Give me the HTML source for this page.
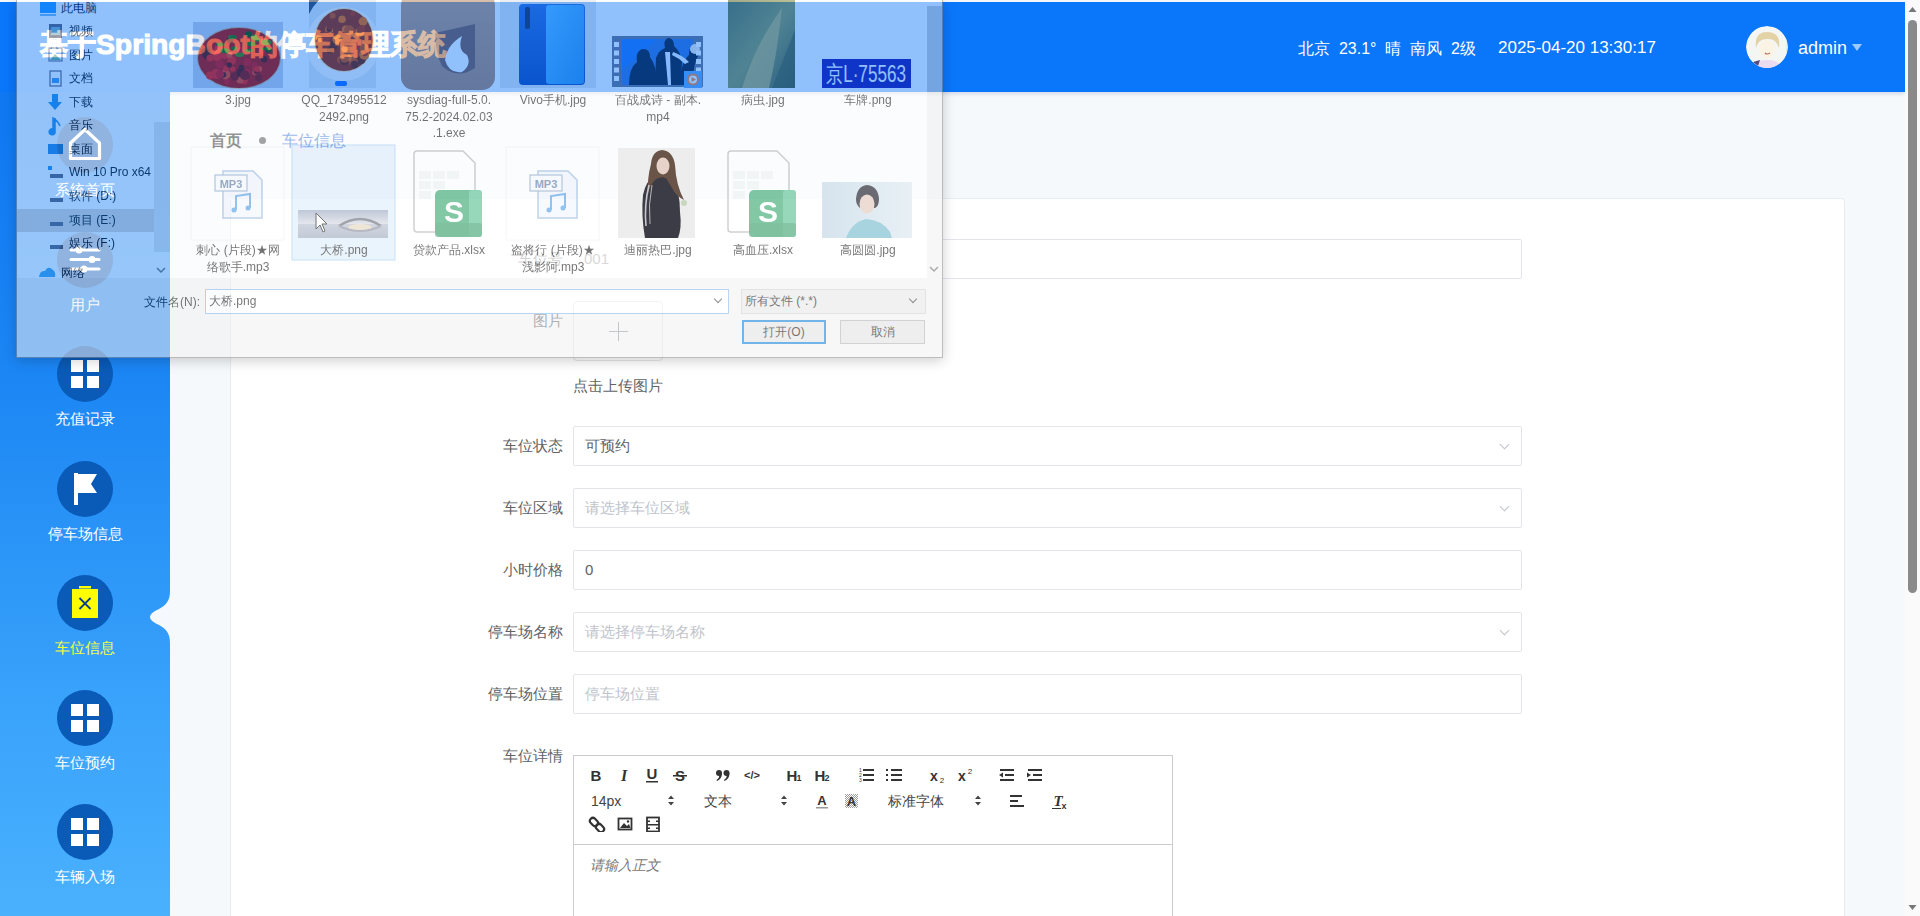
<!DOCTYPE html>
<html><head><meta charset="utf-8">
<style>
*{margin:0;padding:0;box-sizing:border-box}
html,body{width:1920px;height:916px;overflow:hidden;background:#fff;font-family:"Liberation Sans",sans-serif}
#page{position:absolute;left:0;top:0;width:1905px;height:916px;background:#f6f9fc}
#hdr{position:absolute;left:0;top:2px;width:1905px;height:90px;background:#0a76fa;box-shadow:0 2px 4px rgba(0,40,120,.15);color:#fff}
#hdr .title{position:absolute;left:40px;top:24px;font-size:28.3px;font-weight:bold;-webkit-text-stroke:1px #fff;white-space:nowrap;letter-spacing:0}
#hdr .wx{position:absolute;left:1298px;top:37px;font-size:16px;white-space:pre}
#hdr .dt{position:absolute;left:1498px;top:36px;font-size:17px}
#hdr .av{position:absolute;left:1746px;top:24px;width:42px;height:42px;border-radius:50%}
#hdr .un{position:absolute;left:1798px;top:36px;font-size:18px}
#hdr .tri{position:absolute;left:1852px;top:42px;width:0;height:0;border-left:5px solid transparent;border-right:5px solid transparent;border-top:7px solid #9ccaff}
#side{position:absolute;left:0;top:92px;width:170px;height:824px;background:linear-gradient(180deg,#0f78f2 0%,#1c86f4 35%,#3aa3fb 75%,#4ab1fd 100%)}
.mi{position:absolute;left:0;width:170px;text-align:center;color:#fff;font-size:15px}
.mi .c{position:absolute;left:57px;top:0;width:56px;height:56px;border-radius:50%;background:#0a5ab8}
.mi .t{position:absolute;left:0;top:64px;width:170px;text-align:center;white-space:nowrap}
.grid4{position:absolute;left:14px;top:14px;width:28px;height:28px}
.grid4 i{position:absolute;width:12px;height:12px;background:#fff}
#notch{position:absolute;left:148px;top:499px}
#crumb{position:absolute;left:210px;top:131px;font-size:16px;color:#111;font-weight:bold;white-space:nowrap}
#crumb .dot{display:inline-block;width:7px;height:7px;border-radius:50%;background:#333;margin:0 16px 3px 17px;vertical-align:middle}
#crumb .cur{color:#2060d8;font-weight:normal}
#card{position:absolute;left:230px;top:198px;width:1615px;height:760px;background:#fff;border:1px solid #e8ebef;border-radius:4px}
.lbl{position:absolute;right:1342px;font-size:15px;line-height:20px;color:#606266;white-space:nowrap;text-align:right}
.inp{position:absolute;left:573px;width:949px;height:40px;border:1px solid #e2e5ea;border-radius:2px;background:#fff;font-size:15px;color:#606266;padding-left:11px;line-height:38px}
.inp.ph{color:#c0c4cc}
.inp .arr{position:absolute;right:13px;top:14px;width:7px;height:7px;border-right:1px solid #c0c4cc;border-bottom:1px solid #c0c4cc;transform:rotate(45deg)}
#sb{position:absolute;left:1905px;top:0;width:15px;height:916px;background:#fafafa}
#sb .th{position:absolute;left:3px;top:20px;width:9px;height:573px;border-radius:5px;background:#8a8a8a}

#up{position:absolute;left:573px;top:301px;width:90px;height:60px;border:1px solid #e6e6e6;border-radius:4px;background:#fff}
#up .ph1{position:absolute;left:35px;top:29px;width:19px;height:1px;background:#8c939d}
#up .ph2{position:absolute;left:44px;top:20px;width:1px;height:19px;background:#8c939d}
#uptxt{position:absolute;left:573px;top:377px;font-size:15px;color:#606266}
#ed{position:absolute;left:573px;top:755px;width:600px;height:200px;border:1px solid #ccc;background:#fff}
#tb{position:absolute;left:0;top:0;width:598px;height:89px;border-bottom:1px solid #ccc}
#edph{position:absolute;left:16px;top:101px;font-size:14px;color:#777;font-style:italic}
.tg{position:absolute;white-space:nowrap;line-height:18px}

#dlg{position:absolute;left:16px;top:0;width:927px;height:358px;opacity:.55;background:#fff;box-shadow:0 3px 12px rgba(0,0,0,.35);border:1px solid #888;border-top:0;font-size:12px;color:#000;overflow:hidden}
#dlg .nav{position:absolute;left:0;top:0;width:153px;height:278px;background:#fff}
#dlg .nav .it{position:absolute;left:52px;white-space:nowrap;line-height:16px}
#dlg .nav .sel{position:absolute;left:0;top:209px;width:137px;height:23px;background:#dcd4cc}
#dlg .nav .vs{position:absolute;left:137px;top:122px;width:16px;height:130px;background:#e6e6e6}
#dlg .fn{position:absolute;text-align:center;width:100px;line-height:16.5px;color:#000;white-space:nowrap}
#dlg .btm{position:absolute;left:0;top:278px;width:925px;height:79px;background:#f0f0f0}
#dlg .vs2{position:absolute;left:910px;top:0;width:15px;height:278px;background:#f0f0f0}
#dlg .vs2 .th{position:absolute;left:0;top:0;width:15px;height:92px;background:#c8c8c8}
.chev{position:absolute;width:6px;height:6px;border-right:1px solid #333;border-bottom:1px solid #333;transform:rotate(45deg)}
</style></head><body>
<div id="page">
  <div id="crumb">首页<span class="dot"></span><span class="cur">车位信息</span></div>
  <div id="card"></div>
<div class="lbl" style="top:249px;color:#9a9a9a">车位号</div><div class="inp val" style="top:239px">001</div>
<div class="lbl" style="top:436px">车位状态</div><div class="inp val" style="top:426px">可预约<span class="arr"></span></div>
<div class="lbl" style="top:498px">车位区域</div><div class="inp ph" style="top:488px">请选择车位区域<span class="arr"></span></div>
<div class="lbl" style="top:560px">小时价格</div><div class="inp val" style="top:550px">0</div>
<div class="lbl" style="top:622px">停车场名称</div><div class="inp ph" style="top:612px">请选择停车场名称<span class="arr"></span></div>
<div class="lbl" style="top:684px">停车场位置</div><div class="inp ph" style="top:674px">停车场位置</div>
<div class="lbl" style="top:311px">图片</div>
<div id="up"><span class="ph1"></span><span class="ph2"></span></div>
<div id="uptxt">点击上传图片</div>
<div class="lbl" style="top:746px">车位详情</div>
<div style="position:absolute;left:229px;top:197px;width:714px;height:3px;background:linear-gradient(#f5f8fc 50%,#fff 50%)"></div><div style="position:absolute;left:572px;top:237px;width:371px;height:44px;background:#fff"></div><div style="position:absolute;left:584px;top:249px;font-size:15px;color:#a8a8a8;line-height:20px">001</div>
<div id="ed"><div id="tb"></div><svg class="tg" style="left:13.0px;top:11.3px" width="18" height="16" viewBox="0 0 18 16"><text x="9" y="14" font-size="15" font-weight="bold" text-anchor="middle" fill="#333" font-family="Liberation Sans">B</text></svg><svg class="tg" style="left:41.0px;top:11.3px" width="18" height="16" viewBox="0 0 18 16"><text x="9" y="14" font-size="16" font-style="italic" text-anchor="middle" fill="#333" font-family="Liberation Serif" font-weight="bold">I</text></svg><svg class="tg" style="left:69.0px;top:11.3px" width="18" height="16" viewBox="0 0 18 16"><text x="9" y="12" font-size="15" text-anchor="middle" fill="#333" font-family="Liberation Sans" font-weight="bold">U</text><rect x="3" y="14" width="12" height="1.5" fill="#333"/></svg><svg class="tg" style="left:97.0px;top:11.3px" width="18" height="16" viewBox="0 0 18 16"><text x="9" y="14" font-size="15" text-anchor="middle" fill="#333" font-family="Liberation Sans" font-weight="bold">S</text><rect x="2" y="8" width="14" height="1.5" fill="#333"/></svg><svg class="tg" style="left:140.0px;top:11.3px" width="18" height="16" viewBox="0 0 18 16"><g fill="#333"><circle cx="5" cy="6" r="3"/><path d="M8 6 Q8 12 3 14 L2.5 13 Q5.5 11 5.5 8Z"/><circle cx="12.5" cy="6" r="3"/><path d="M15.5 6 Q15.5 12 10.5 14 L10 13 Q13 11 13 8Z"/></g></svg><svg class="tg" style="left:169.0px;top:11.3px" width="18" height="16" viewBox="0 0 18 16"><text x="9" y="12" font-size="11" text-anchor="middle" fill="#333" font-family="Liberation Sans" font-weight="bold">&lt;/&gt;</text></svg><svg class="tg" style="left:210.0px;top:11.3px" width="20" height="16" viewBox="0 0 20 16"><text x="8" y="14" font-size="15" text-anchor="middle" fill="#333" font-family="Liberation Sans" font-weight="bold">H</text><text x="15" y="14" font-size="9" text-anchor="middle" fill="#333" font-family="Liberation Sans" font-weight="bold">1</text></svg><svg class="tg" style="left:238.0px;top:11.3px" width="20" height="16" viewBox="0 0 20 16"><text x="8" y="14" font-size="15" text-anchor="middle" fill="#333" font-family="Liberation Sans" font-weight="bold">H</text><text x="15" y="14" font-size="9" text-anchor="middle" fill="#333" font-family="Liberation Sans" font-weight="bold">2</text></svg><svg class="tg" style="left:283.0px;top:11.3px" width="18" height="16" viewBox="0 0 18 16"><g fill="#333"><rect x="6" y="2" width="11" height="2"/><rect x="6" y="7" width="11" height="2"/><rect x="6" y="12" width="11" height="2"/></g><text x="2" y="5" font-size="5" fill="#333">1</text><text x="2" y="10" font-size="5" fill="#333">2</text><text x="2" y="15" font-size="5" fill="#333">3</text></svg><svg class="tg" style="left:311.0px;top:11.3px" width="18" height="16" viewBox="0 0 18 16"><g fill="#333"><rect x="6" y="2" width="11" height="2"/><rect x="6" y="7" width="11" height="2"/><rect x="6" y="12" width="11" height="2"/><rect x="1" y="2" width="2" height="2"/><rect x="1" y="7" width="2" height="2"/><rect x="1" y="12" width="2" height="2"/></g></svg><svg class="tg" style="left:353.0px;top:11.3px" width="18" height="16" viewBox="0 0 18 16"><text x="7" y="14" font-size="14" text-anchor="middle" fill="#333" font-family="Liberation Sans" font-weight="bold">x</text><text x="15" y="16" font-size="8" text-anchor="middle" fill="#333" font-family="Liberation Sans">2</text></svg><svg class="tg" style="left:381.0px;top:11.3px" width="18" height="16" viewBox="0 0 18 16"><text x="7" y="14" font-size="14" text-anchor="middle" fill="#333" font-family="Liberation Sans" font-weight="bold">x</text><text x="15" y="7" font-size="8" text-anchor="middle" fill="#333" font-family="Liberation Sans">2</text></svg><svg class="tg" style="left:424.0px;top:11.3px" width="18" height="16" viewBox="0 0 18 16"><g fill="#333"><rect x="2" y="2" width="14" height="2"/><rect x="7" y="7" width="9" height="2"/><rect x="2" y="12" width="14" height="2"/><path d="M1 8 L5 5.5 V10.5 Z"/></g></svg><svg class="tg" style="left:452.0px;top:11.3px" width="18" height="16" viewBox="0 0 18 16"><g fill="#333"><rect x="2" y="2" width="14" height="2"/><rect x="7" y="7" width="9" height="2"/><rect x="2" y="12" width="14" height="2"/><path d="M5 8 L1 5.5 V10.5 Z"/></g></svg><span class="tg" style="left:17px;top:36px;font-size:14px;color:#444">14px</span><svg class="tg" style="left:93.0px;top:39px" width="8" height="11" viewBox="0 0 8 11"><path d="M1 4 L4 0.5 L7 4 Z M1 7 L4 10.5 L7 7 Z" fill="#444"/></svg><span class="tg" style="left:130px;top:36px;font-size:14px;color:#444">文本</span><svg class="tg" style="left:206.0px;top:39px" width="8" height="11" viewBox="0 0 8 11"><path d="M1 4 L4 0.5 L7 4 Z M1 7 L4 10.5 L7 7 Z" fill="#444"/></svg><svg class="tg" style="left:239.0px;top:36.5px" width="18" height="16" viewBox="0 0 18 16"><text x="9" y="12" font-size="13" text-anchor="middle" fill="#333" font-family="Liberation Sans" font-weight="bold">A</text><rect x="3" y="14" width="12" height="1.5" fill="#999"/></svg><svg class="tg" style="left:268.0px;top:36.5px" width="18" height="16" viewBox="0 0 18 16"><defs><pattern id="hatch" width="2" height="2" patternUnits="userSpaceOnUse"><rect width="1" height="1" fill="#777"/><rect x="1" y="1" width="1" height="1" fill="#777"/></pattern></defs><rect x="3" y="1" width="13" height="14" fill="url(#hatch)" opacity=".7"/><text x="9.5" y="13" font-size="13" text-anchor="middle" fill="#333" font-family="Liberation Sans" font-weight="bold">A</text></svg><span class="tg" style="left:314px;top:36px;font-size:14px;color:#444">标准字体</span><svg class="tg" style="left:400.0px;top:39px" width="8" height="11" viewBox="0 0 8 11"><path d="M1 4 L4 0.5 L7 4 Z M1 7 L4 10.5 L7 7 Z" fill="#444"/></svg><svg class="tg" style="left:434.0px;top:36.5px" width="18" height="16" viewBox="0 0 18 16"><g fill="#333"><rect x="2" y="2" width="12" height="2"/><rect x="2" y="7" width="8" height="2"/><rect x="2" y="12" width="14" height="2"/></g></svg><svg class="tg" style="left:477.0px;top:36.5px" width="18" height="16" viewBox="0 0 18 16"><text x="7" y="13" font-size="15" font-style="italic" text-anchor="middle" fill="#333" font-family="Liberation Serif" font-weight="bold">T</text><text x="13" y="16" font-size="9" text-anchor="middle" fill="#333" font-family="Liberation Sans" font-weight="bold">x</text><rect x="1" y="15" width="9" height="1.5" fill="#333"/></svg><svg class="tg" style="left:14.0px;top:60.0px" width="18" height="16" viewBox="0 0 18 16"><g fill="none" stroke="#333" stroke-width="2.2"><rect x="1.5" y="3" width="9" height="6" rx="3" transform="rotate(45 6 6)"/><rect x="7.5" y="9" width="9" height="6" rx="3" transform="rotate(45 12 12)"/></g></svg><svg class="tg" style="left:42.0px;top:60.0px" width="18" height="16" viewBox="0 0 18 16"><rect x="2.5" y="2.5" width="13" height="11" fill="none" stroke="#333" stroke-width="1.8"/><path d="M4 12 L8 7 L11 10 L13 8 L14.5 12 Z" fill="#333"/><circle cx="12" cy="5.5" r="1.2" fill="#333"/></svg><svg class="tg" style="left:70.0px;top:60.0px" width="18" height="16" viewBox="0 0 18 16"><rect x="3" y="1.5" width="12" height="14" fill="none" stroke="#333" stroke-width="1.8"/><g fill="#333"><rect x="3" y="4.5" width="3" height="1.5"/><rect x="3" y="8" width="3" height="1.5"/><rect x="3" y="11.5" width="3" height="1.5"/><rect x="12" y="4.5" width="3" height="1.5"/><rect x="12" y="8" width="3" height="1.5"/><rect x="12" y="11.5" width="3" height="1.5"/><rect x="6" y="8" width="6" height="1.5"/></g></svg><div id="edph">请输入正文</div></div>

</div>
<div id="hdr">
  <div class="title">基于SpringBoot的停车管理系统</div>
  <div class="wx">北京  23.1°  晴  南风  2级</div>
  <div class="dt">2025-04-20 13:30:17</div>
  <svg class="av" viewBox="0 0 42 42"><defs><clipPath id="avc"><circle cx="21" cy="21" r="21"/></clipPath></defs><g clip-path="url(#avc)"><rect width="42" height="42" fill="#f4f6f4"/><path d="M36 4 Q44 18 40 30 L42 0Z" fill="#b8ecf0"/><path d="M10 22 Q8 6 21 6 Q35 6 33 22 Q30 12 21 13 Q12 13 10 22Z" fill="#e2d2a6"/><path d="M13 20 Q14 31 21 33 Q29 31 29 20 Q25 14 21 14 Q16 14 13 20Z" fill="#fbf3e4"/><path d="M19 27 Q21 29 24 27" stroke="#c07060" stroke-width="1.2" fill="none"/><path d="M6 42 Q10 33 21 34 Q32 33 36 42Z" fill="#eadcf0"/><path d="M7 36 L14 34 L12 40Z" fill="#5a4a7a"/></g></svg>
  <div class="un">admin</div>
  <div class="tri"></div>
</div>
<div id="side">
<div class="mi" style="top:25.0px;color:#fff"><div class="c"><svg width="56" height="56" viewBox="0 0 56 56"><path d="M13.5 26 L28 12.5 L42.5 26 V41.5 H13.5 Z" fill="none" stroke="#fff" stroke-width="3.2" stroke-linejoin="round"/></svg></div><div class="t">系统首页</div></div>
<div class="mi" style="top:139.5px;color:#fff"><div class="c"><svg width="56" height="56" viewBox="0 0 56 56"><g stroke="#fff" stroke-width="3" stroke-linecap="round"><line x1="14" y1="18" x2="42" y2="18"/><line x1="14" y1="27.5" x2="42" y2="27.5"/><line x1="14" y1="37" x2="42" y2="37"/></g><g fill="#fff"><circle cx="22" cy="18" r="3.5"/><circle cx="35" cy="27.5" r="3.5"/><circle cx="27" cy="37" r="3.5"/></g></svg></div><div class="t">用户</div></div>
<div class="mi" style="top:254.0px;color:#fff"><div class="c"><svg width="56" height="56" viewBox="0 0 56 56"><g fill="#fff"><rect x="14" y="14" width="12" height="12"/><rect x="30" y="14" width="12" height="12"/><rect x="14" y="30" width="12" height="12"/><rect x="30" y="30" width="12" height="12"/></g></svg></div><div class="t">充值记录</div></div>
<div class="mi" style="top:368.5px;color:#fff"><div class="c"><svg width="56" height="56" viewBox="0 0 56 56"><path d="M17 12 H21 V44 H17 Z" fill="#fff"/><path d="M21 13 H40 L34 23 L40 32 H21 Z" fill="#fff"/></svg></div><div class="t">停车场信息</div></div>
<div class="mi" style="top:483.0px;color:#f5ff3a"><div class="c"><svg width="56" height="56" viewBox="0 0 56 56"><rect x="15" y="14" width="26" height="29" fill="#ffff00"/><rect x="22" y="11" width="12" height="2.5" fill="#ffff00"/><path d="M22.5 23 L33.5 34 M33.5 23 L22.5 34" stroke="#0a3f8a" stroke-width="1.8"/></svg></div><div class="t">车位信息</div></div>
<div class="mi" style="top:597.5px;color:#fff"><div class="c"><svg width="56" height="56" viewBox="0 0 56 56"><g fill="#fff"><rect x="14" y="14" width="12" height="12"/><rect x="30" y="14" width="12" height="12"/><rect x="14" y="30" width="12" height="12"/><rect x="30" y="30" width="12" height="12"/></g></svg></div><div class="t">车位预约</div></div>
<div class="mi" style="top:712.0px;color:#fff"><div class="c"><svg width="56" height="56" viewBox="0 0 56 56"><g fill="#fff"><rect x="14" y="14" width="12" height="12"/><rect x="30" y="14" width="12" height="12"/><rect x="14" y="30" width="12" height="12"/><rect x="30" y="30" width="12" height="12"/></g></svg></div><div class="t">车辆入场</div></div>
<svg id="notch" width="24" height="52" viewBox="0 0 24 52"><path d="M22 0 C22 10 18 14 11 18 C5 21 2 23 2 26 C2 29 5 31 11 34 C18 38 22 42 22 52 L24 52 L24 0 Z" fill="#f5f8fc"/></svg>
</div>
<div id="dlg"><div class="nav"><div class="sel"></div><div class="vs"></div><div class="it" style="left:44px;top:0px">此电脑</div><div class="it" style="left:52px;top:23px">视频</div><div class="it" style="left:52px;top:47px">图片</div><div class="it" style="left:52px;top:70px">文档</div><div class="it" style="left:52px;top:94px">下载</div><div class="it" style="left:52px;top:117px">音乐</div><div class="it" style="left:52px;top:141px">桌面</div><div class="it" style="left:52px;top:164px">Win 10 Pro x64</div><div class="it" style="left:52px;top:188px">软件 (D:)</div><div class="it" style="left:52px;top:212px">项目 (E:)</div><div class="it" style="left:52px;top:235px">娱乐 (F:)</div><div class="it" style="left:44px;top:265px">网络</div><svg style="position:absolute;left:0;top:0" width="153" height="278">
<rect x="23" y="2" width="16" height="11" fill="#1e90ff"/><rect x="23" y="14" width="16" height="2" fill="#6cb4f0"/>
<rect x="32" y="24" width="13" height="14" fill="#556" /><rect x="34" y="27" width="9" height="8" fill="#7ab"/>
<rect x="32" y="48" width="13" height="13" fill="none" stroke="#667" stroke-width="1.2"/><path d="M33 60 L38 54 L44 60Z" fill="#6a8"/>
<rect x="33" y="71" width="11" height="15" fill="none" stroke="#556" stroke-width="1.2"/><rect x="35" y="78" width="7" height="5" fill="#3a8ee6"/>
<path d="M35 94 H41 V102 H45 L38 110 L31 102 H35 Z" fill="#1e88e5"/>
<path d="M38 118 V131 A3 3 0 1 1 36 129 V118 Q41 121 43 126" fill="#1e88e5" stroke="#1e88e5" stroke-width="1.5"/>
<rect x="31" y="144" width="15" height="10" fill="#1e7fdc"/>
<rect x="31" y="166" width="4" height="4" fill="#1e88e5"/><rect x="33" y="174" width="13" height="4" fill="#556"/>
<rect x="33" y="198" width="13" height="4" fill="#556"/>
<rect x="33" y="222" width="13" height="4" fill="#556"/>
<rect x="33" y="245" width="13" height="4" fill="#556"/>
<path d="M22 277 Q23 270 28 271 Q31 265 36 270 Q39 272 38 277 Z" fill="#3a9be8"/>
<path d="M140 268 L144 272 L148 268" fill="none" stroke="#666" stroke-width="1.5"/>
</svg></div><svg style="position:absolute;left:0;top:0" width="925" height="278">
<defs>
<radialGradient id="food1" cx="50%" cy="55%" r="55%"><stop offset="0" stop-color="#c00000"/><stop offset=".55" stop-color="#f00000"/><stop offset=".85" stop-color="#a00000"/><stop offset="1" stop-color="#800000"/></radialGradient>
<radialGradient id="food2" cx="50%" cy="50%" r="50%"><stop offset="0" stop-color="#a01a00"/><stop offset=".6" stop-color="#8a0d00"/><stop offset="1" stop-color="#6a1000"/></radialGradient>
<linearGradient id="vivo" x1="0" y1="0" x2="0" y2="1"><stop offset="0" stop-color="#2a60d0"/><stop offset="1" stop-color="#0a3aa8"/></linearGradient>
<linearGradient id="vivo2" x1="0" y1="0" x2="1" y2="1"><stop offset="0" stop-color="#5ab8ff"/><stop offset="1" stop-color="#2a8ae0"/></linearGradient>
<linearGradient id="leaf" x1="0" y1="0" x2="1" y2="1"><stop offset="0" stop-color="#606a30"/><stop offset=".5" stop-color="#8a9040"/><stop offset="1" stop-color="#4a5020"/></linearGradient>
<linearGradient id="bridge" x1="0" y1="0" x2="0" y2="1"><stop offset="0" stop-color="#8a9ab8"/><stop offset=".5" stop-color="#d0d4de"/><stop offset="1" stop-color="#9aa8bc"/></linearGradient>
<linearGradient id="girl2" x1="0" y1="0" x2="1" y2="0"><stop offset="0" stop-color="#b8d4ea"/><stop offset="1" stop-color="#dfeaf3"/></linearGradient>
<linearGradient id="sysg" x1="0" y1="0" x2="0" y2="1"><stop offset="0" stop-color="#c0906a"/><stop offset="1" stop-color="#b07a55"/></linearGradient>
</defs>
<rect x="176" y="22" width="90" height="66" fill="#c8ccdc"/>
<ellipse cx="222" cy="58" rx="41" ry="30" fill="#c00010"/>
<circle cx="215.6" cy="69.0" r="2.7" fill="#ff1020"/>
<circle cx="200.2" cy="56.5" r="4.8" fill="#ff1020"/>
<circle cx="224.4" cy="67.4" r="2.7" fill="#600010"/>
<circle cx="242.3" cy="69.1" r="2.8" fill="#ff4030"/>
<circle cx="226.9" cy="80.3" r="3.9" fill="#ff1020"/>
<circle cx="192.9" cy="75.5" r="3.9" fill="#ff1020"/>
<circle cx="238.0" cy="72.5" r="2.8" fill="#ff4030"/>
<circle cx="210.0" cy="81.9" r="2.8" fill="#e00020"/>
<circle cx="207.5" cy="55.1" r="3.9" fill="#ff1020"/>
<circle cx="230.3" cy="62.4" r="3.7" fill="#e00020"/>
<circle cx="190.0" cy="55.5" r="4.0" fill="#600010"/>
<circle cx="202.6" cy="64.1" r="4.2" fill="#e00020"/>
<circle cx="223.0" cy="79.7" r="3.7" fill="#ff4030"/>
<circle cx="208.3" cy="74.5" r="5.0" fill="#ff4030"/>
<circle cx="239.6" cy="71.4" r="2.9" fill="#900010"/>
<circle cx="214.7" cy="60.4" r="4.4" fill="#ff1020"/>
<circle cx="191.0" cy="49.2" r="3.4" fill="#900010"/>
<circle cx="206.6" cy="74.8" r="2.7" fill="#600010"/>
<circle cx="238.0" cy="67.5" r="2.7" fill="#ff1020"/>
<circle cx="213.1" cy="40.0" r="3.2" fill="#600010"/>
<circle cx="199.2" cy="74.0" r="4.9" fill="#ff1020"/>
<circle cx="204.2" cy="76.0" r="2.6" fill="#600010"/>
<circle cx="223.5" cy="50.7" r="3.5" fill="#e00020"/>
<circle cx="244.6" cy="50.9" r="3.6" fill="#e00020"/>
<circle cx="188.9" cy="52.5" r="4.7" fill="#600010"/>
<circle cx="217.8" cy="76.5" r="4.2" fill="#900010"/>
<circle cx="209.0" cy="68.5" r="2.9" fill="#ff1020"/>
<circle cx="224.0" cy="72.5" r="4.6" fill="#600010"/>
<circle cx="230.1" cy="72.6" r="3.5" fill="#e00020"/>
<circle cx="203.0" cy="74.3" r="4.2" fill="#e00020"/>
<circle cx="193.1" cy="58.0" r="3.6" fill="#ff1020"/>
<circle cx="246.9" cy="41.6" r="3.5" fill="#ff4030"/>
<circle cx="212.4" cy="65.0" r="2.7" fill="#600010"/>
<circle cx="237.4" cy="64.9" r="2.8" fill="#e00020"/>
<circle cx="212.5" cy="55.1" r="2.9" fill="#ff4030"/>
<circle cx="239.9" cy="69.3" r="2.7" fill="#ff1020"/>
<circle cx="227.9" cy="75.4" r="4.9" fill="#900010"/>
<circle cx="201.6" cy="49.3" r="4.6" fill="#ff1020"/>
<circle cx="247.2" cy="59.2" r="3.3" fill="#600010"/>
<circle cx="241.8" cy="77.7" r="3.7" fill="#900010"/>
<ellipse cx="234.4" cy="43.9" rx="4.9" ry="2.3" fill="#208000"/>
<ellipse cx="203.4" cy="44.5" rx="4.3" ry="1.9" fill="#208000"/>
<ellipse cx="231.6" cy="34.1" rx="3.6" ry="2.9" fill="#105000"/>
<ellipse cx="215.3" cy="37.1" rx="4.3" ry="2.0" fill="#40a010"/>
<ellipse cx="207.7" cy="50.7" rx="4.4" ry="2.7" fill="#208000"/>
<ellipse cx="237.2" cy="37.2" rx="3.5" ry="2.6" fill="#40a010"/>
<ellipse cx="251.4" cy="50.2" rx="2.8" ry="2.5" fill="#105000"/>
<ellipse cx="249.5" cy="42.3" rx="5.0" ry="2.9" fill="#40a010"/>
<ellipse cx="215.8" cy="37.1" rx="3.4" ry="2.0" fill="#208000"/>
<ellipse cx="222.5" cy="54.7" rx="4.5" ry="2.2" fill="#40a010"/>
<ellipse cx="232.2" cy="50.4" rx="4.5" ry="1.7" fill="#208000"/>
<ellipse cx="217.1" cy="48.4" rx="3.4" ry="1.8" fill="#208000"/>
<ellipse cx="240.0" cy="39.6" rx="3.2" ry="2.1" fill="#40a010"/>
<ellipse cx="249.0" cy="48.7" rx="5.0" ry="1.5" fill="#208000"/>
<rect x="292" y="0" width="67" height="88" fill="#e6e8ea"/>
<path d="M292 0 H302 Q296 6 292 14Z" fill="#303850"/>
<circle cx="326" cy="44" r="37" fill="#fff8f0"/>
<ellipse cx="327" cy="40" rx="29" ry="31" fill="#a01800"/>
<circle cx="312.1" cy="29.7" r="4.0" fill="#ff6800"/>
<circle cx="312.2" cy="29.1" r="2.9" fill="#701000"/>
<circle cx="323.4" cy="38.8" r="3.8" fill="#c02000"/>
<circle cx="342.7" cy="32.5" r="4.6" fill="#ff6800"/>
<circle cx="330.2" cy="53.6" r="3.8" fill="#701000"/>
<circle cx="328.3" cy="24.1" r="3.5" fill="#a01800"/>
<circle cx="343.9" cy="59.6" r="4.7" fill="#701000"/>
<circle cx="314.7" cy="18.4" r="3.6" fill="#a01800"/>
<circle cx="343.0" cy="30.2" r="2.9" fill="#a01800"/>
<circle cx="302.8" cy="38.3" r="4.0" fill="#ff6800"/>
<circle cx="328.6" cy="29.3" r="3.7" fill="#ff6800"/>
<circle cx="324.0" cy="19.4" r="4.2" fill="#701000"/>
<circle cx="309.3" cy="36.3" r="4.7" fill="#c02000"/>
<circle cx="337.7" cy="44.3" r="4.4" fill="#c02000"/>
<circle cx="307.5" cy="39.0" r="3.6" fill="#c02000"/>
<circle cx="312.9" cy="27.1" r="3.0" fill="#a01800"/>
<circle cx="323.8" cy="59.7" r="3.8" fill="#d84000"/>
<circle cx="327.3" cy="60.3" r="4.8" fill="#701000"/>
<circle cx="336.1" cy="32.1" r="2.8" fill="#d84000"/>
<circle cx="339.5" cy="52.9" r="4.2" fill="#c02000"/>
<circle cx="316.2" cy="45.6" r="4.5" fill="#701000"/>
<circle cx="335.2" cy="33.4" r="2.9" fill="#701000"/>
<circle cx="346.0" cy="21.5" r="4.4" fill="#ff6800"/>
<circle cx="347.3" cy="54.7" r="5.0" fill="#ff6800"/>
<circle cx="332.2" cy="30.2" r="5.0" fill="#d84000"/>
<circle cx="313.1" cy="50.3" r="3.3" fill="#701000"/>
<circle cx="326.4" cy="36.2" r="3.6" fill="#a01800"/>
<circle cx="322.3" cy="23.4" r="4.1" fill="#a01800"/>
<circle cx="320.4" cy="39.5" r="4.9" fill="#ff6800"/>
<circle cx="337.6" cy="48.8" r="4.8" fill="#c02000"/>
<circle cx="336.4" cy="62.1" r="4.6" fill="#d84000"/>
<circle cx="315.7" cy="15.7" r="2.9" fill="#d84000"/>
<circle cx="344.2" cy="29.7" r="2.7" fill="#701000"/>
<circle cx="347.2" cy="48.2" r="4.7" fill="#d84000"/>
<circle cx="326.6" cy="43.6" r="4.5" fill="#c02000"/>
<circle cx="347.8" cy="53.0" r="3.2" fill="#c02000"/>
<circle cx="329.0" cy="42.1" r="3.5" fill="#a01800"/>
<circle cx="344.7" cy="28.8" r="3.8" fill="#c02000"/>
<circle cx="327.6" cy="49.2" r="3.2" fill="#ff6800"/>
<circle cx="337.5" cy="64.5" r="3.8" fill="#701000"/>
<circle cx="331.8" cy="58.0" r="3.2" fill="#ff6800"/>
<circle cx="335.6" cy="13.7" r="2.5" fill="#c02000"/>
<circle cx="325.0" cy="19.3" r="3.8" fill="#ff6800"/>
<circle cx="327.5" cy="58.7" r="4.1" fill="#d84000"/>
<circle cx="303.5" cy="32.5" r="3.3" fill="#a01800"/>
<rect x="318" y="81" width="12" height="5" rx="2" fill="#1060ff"/>
<rect x="384" y="-8" width="94" height="98" rx="13" fill="url(#sysg)"/>
<path d="M418 33 L458 24 L458 68 Q440 80 425 66 Q418 52 418 33Z" fill="#784a35"/>
<path d="M428 60 Q430 45 445 36 Q440 50 450 55 Q455 65 445 72 Q432 74 428 60Z" fill="#fff"/>
<rect x="483" y="0" width="96" height="88" fill="#e4e6ea"/>
<rect x="502" y="4" width="66" height="81" rx="4" fill="url(#vivo)"/>
<rect x="529" y="5" width="38" height="79" rx="3" fill="url(#vivo2)"/>
<rect x="508" y="7" width="5" height="22" rx="2" fill="#102040"/>
<rect x="595" y="36" width="91" height="51" fill="#65687b"/>
<rect x="605" y="39" width="71" height="46" fill="#2e68d0"/>
<path d="M605 39 H640 L605 70Z" fill="#1070ff" opacity=".6"/>
<path d="M612 85 Q612 68 620 62 Q618 52 625 49 Q633 48 633 57 Q640 66 640 85Z" fill="#06081a"/>
<path d="M638 85 L639 58 Q642 50 648 48 Q646 40 651 38 Q657 38 657 46 Q664 52 665 62 L664 85Z" fill="#06081a"/>
<path d="M648 52 L651 85 L654 85 L653 52Z" fill="#f0f0ff"/>
<path d="M662 85 Q664 62 672 55 Q672 45 678 44 Q684 45 683 54 Q676 60 676 85Z" fill="#06081a"/>
<path d="M656 52 Q665 55 672 62 L668 64 Q662 58 655 55Z" fill="#e8f0ff"/>
<ellipse cx="678" cy="49" rx="5" ry="5" fill="#f0e8e0"/>
<g fill="#fff">
<rect x="597" y="42" width="5" height="5"/><rect x="679" y="42" width="5" height="5"/><rect x="597" y="50.5" width="5" height="5"/><rect x="679" y="50.5" width="5" height="5"/><rect x="597" y="59" width="5" height="5"/><rect x="679" y="59" width="5" height="5"/><rect x="597" y="67.5" width="5" height="5"/><rect x="679" y="67.5" width="5" height="5"/><rect x="597" y="76" width="5" height="5"/><rect x="679" y="76" width="5" height="5"/></g>
<rect x="667" y="71" width="18" height="17" fill="#60a0f0"/><circle cx="676" cy="79.5" r="6" fill="#ff7a20"/><circle cx="676" cy="79.5" r="4" fill="#fff"/><path d="M674.5 77 L679 79.5 L674.5 82Z" fill="#ff7a20"/>
<rect x="711" y="0" width="67" height="88" fill="url(#leaf)"/>
<path d="M725 88 Q738 45 765 8 Q760 55 752 88Z" fill="#c0b056" opacity=".8"/>
<path d="M755 88 Q770 50 778 30 L778 88Z" fill="#404818" opacity=".6"/>
<rect x="805" y="59" width="89" height="29" fill="#13009f"/>
<text x="849" y="82" font-size="23" fill="#fff" text-anchor="middle" font-family="Liberation Sans" textLength="80" lengthAdjust="spacingAndGlyphs">京L·75563</text>
<rect x="910" y="92" width="15" height="186" fill="#f0f0f0"/><rect x="910" y="6" width="15" height="86" fill="#cdcdcd"/>
</svg><div class="fn" style="left:171px;top:92.0px">3.jpg</div><div class="fn" style="left:277px;top:92.0px">QQ_173495512</div><div class="fn" style="left:277px;top:108.5px">2492.png</div><div class="fn" style="left:382px;top:92.0px">sysdiag-full-5.0.</div><div class="fn" style="left:382px;top:108.5px">75.2-2024.02.03</div><div class="fn" style="left:382px;top:125.0px">.1.exe</div><div class="fn" style="left:486px;top:92.0px">Vivo手机.jpg</div><div class="fn" style="left:591px;top:92.0px">百战成诗 - 副本.</div><div class="fn" style="left:591px;top:108.5px">mp4</div><div class="fn" style="left:696px;top:92.0px">病虫.jpg</div><div class="fn" style="left:801px;top:92.0px">车牌.png</div><svg style="position:absolute;left:0;top:0" width="925" height="278">
<rect x="275" y="145" width="103" height="115" fill="#d9ebfb" stroke="#99c9f5" stroke-width="1"/>
<rect x="174" y="147" width="93" height="93" fill="none" stroke="#eee"/>
<rect x="489" y="147" width="93" height="93" fill="none" stroke="#eee"/>
<g id="mp3a">
<path d="M206 171 H236 L245 180 V218 H206 Z" fill="#eef4fb" stroke="#8cb0d8" stroke-width="1.5"/>
<rect x="198" y="175" width="32" height="16" fill="#f4f8fc" stroke="#7a9cc0" stroke-width="1.2"/>
<text x="214" y="188" font-size="11" font-weight="bold" fill="#4a6a90" text-anchor="middle" font-family="Liberation Sans">MP3</text>
<path d="M219 210 V196 L233 194 V208" fill="none" stroke="#3a90e0" stroke-width="2"/>
<circle cx="217" cy="210" r="2.5" fill="#3a90e0"/><circle cx="231" cy="208" r="2.5" fill="#3a90e0"/>
</g>
<g transform="translate(315 0)">
<path d="M206 171 H236 L245 180 V218 H206 Z" fill="#eef4fb" stroke="#8cb0d8" stroke-width="1.5"/>
<rect x="198" y="175" width="32" height="16" fill="#f4f8fc" stroke="#7a9cc0" stroke-width="1.2"/>
<text x="214" y="188" font-size="11" font-weight="bold" fill="#4a6a90" text-anchor="middle" font-family="Liberation Sans">MP3</text>
<path d="M219 210 V196 L233 194 V208" fill="none" stroke="#3a90e0" stroke-width="2"/>
<circle cx="217" cy="210" r="2.5" fill="#3a90e0"/><circle cx="231" cy="208" r="2.5" fill="#3a90e0"/>
</g>
<rect x="281" y="210" width="90" height="28" fill="url(#bridge)"/>
<rect x="281" y="224" width="90" height="14" fill="#8896b0" opacity=".5"/>
<path d="M322 226 Q343 212 364 226" fill="none" stroke="#555a66" stroke-width="2.5"/><path d="M322 226 Q343 236 364 226" fill="none" stroke="#7a8090" stroke-width="2"/>
<ellipse cx="343" cy="227" rx="12" ry="3" fill="#f0d8b0" opacity=".8"/>
<g id="xl">
<path d="M400 151 H446 L458 163 V229 Q458 232 455 232 H400 Q397 232 397 229 V154 Q397 151 400 151Z" fill="#fff" stroke="#aaa" stroke-width="1.5" />
<g fill="#eef2f0"><rect x="402" y="171" width="12" height="8"/><rect x="416" y="171" width="12" height="8"/><rect x="430" y="171" width="12" height="8"/><rect x="402" y="181" width="12" height="8"/><rect x="416" y="181" width="12" height="8"/><rect x="402" y="191" width="12" height="8"/></g>
<rect x="418" y="190" width="47" height="47" rx="5" fill="#1c9c5c"/>
<rect x="452" y="190" width="13" height="47" rx="3" fill="#40b880"/>
<rect x="418" y="223" width="47" height="14" rx="3" fill="#188a50" opacity=".7"/>
<text x="437" y="222" font-size="30" font-weight="bold" fill="#fff" text-anchor="middle" font-family="Liberation Sans">S</text>
</g>
<g transform="translate(314 0)">
<path d="M400 151 H446 L458 163 V229 Q458 232 455 232 H400 Q397 232 397 229 V154 Q397 151 400 151Z" fill="#fff" stroke="#aaa" stroke-width="1.5" />
<g fill="#eef2f0"><rect x="402" y="171" width="12" height="8"/><rect x="416" y="171" width="12" height="8"/><rect x="430" y="171" width="12" height="8"/><rect x="402" y="181" width="12" height="8"/><rect x="416" y="181" width="12" height="8"/><rect x="402" y="191" width="12" height="8"/></g>
<rect x="418" y="190" width="47" height="47" rx="5" fill="#1c9c5c"/>
<rect x="452" y="190" width="13" height="47" rx="3" fill="#40b880"/>
<rect x="418" y="223" width="47" height="14" rx="3" fill="#188a50" opacity=".7"/>
<text x="437" y="222" font-size="30" font-weight="bold" fill="#fff" text-anchor="middle" font-family="Liberation Sans">S</text>
</g>
<path d="M913 267 L917 271 L921 267" fill="none" stroke="#666" stroke-width="1.5"/>
<path d="M299 213 V229 L303 225 L306 232 L308 231 L305 224 L310 224 Z" fill="#fff" stroke="#000" stroke-width="1"/>
</svg><div class="fn" style="left:171px;top:242.0px">刺心 (片段)★网</div><div class="fn" style="left:171px;top:258.5px">络歌手.mp3</div><div class="fn" style="left:277px;top:242.0px">大桥.png</div><div class="fn" style="left:382px;top:242.0px">贷款产品.xlsx</div><div class="fn" style="left:486px;top:242.0px">盗将行 (片段)★</div><div class="fn" style="left:486px;top:258.5px">浅影阿.mp3</div><div class="fn" style="left:591px;top:242.0px">迪丽热巴.jpg</div><div class="fn" style="left:696px;top:242.0px">高血压.xlsx</div><div class="fn" style="left:801px;top:242.0px">高圆圆.jpg</div><div class="btm">
<div style="position:absolute;left:127px;top:16px;white-space:nowrap">文件名(N):</div>
<div style="position:absolute;left:188px;top:11px;width:524px;height:25px;background:#fff;border:1px solid #7eb4ea;padding-left:3px;line-height:23px">大桥.png<span class="chev" style="left:509px;top:6px"></span></div>
<div style="position:absolute;left:724px;top:11px;width:185px;height:25px;background:#e5e5e5;border:1px solid #ccc;padding-left:3px;line-height:23px">所有文件 (*.*)<span class="chev" style="left:168px;top:6px"></span></div>
<div style="position:absolute;left:725px;top:42px;width:84px;height:24px;background:#e1e1e1;border:2px solid #0078d7;text-align:center;line-height:20px">打开(O)</div>
<div style="position:absolute;left:823px;top:42px;width:85px;height:24px;background:#e1e1e1;border:1px solid #adadad;text-align:center;line-height:22px">取消</div>
</div></div>
<svg id="ovl" style="position:absolute;left:0;top:0;pointer-events:none" width="960" height="360">
<ellipse cx="239" cy="58" rx="42" ry="31" fill="#ffd8b8" style="mix-blend-mode:multiply"/>
<ellipse cx="344" cy="40" rx="30" ry="32" fill="#ffe8c8" style="mix-blend-mode:multiply"/>
<defs><linearGradient id="g2bg" x1="0" y1="0" x2="1" y2="0"><stop offset="0" stop-color="#d6e4ee"/><stop offset="1" stop-color="#e8f0f5"/></linearGradient></defs>
<rect x="618" y="148" width="77" height="90" fill="#ededee"/>
<path d="M645 238 Q641 215 643 195 Q646 180 655 176 L672 178 Q680 190 680 212 Q682 228 678 238 Z" fill="#3c3c46"/>
<path d="M651 164 Q652 151 662 150 Q673 151 675 165 Q676 185 684 200 Q676 196 672 188 L666 178 Q660 176 655 180 Q650 185 648 195 Q647 178 651 164Z" fill="#6a5448"/>
<ellipse cx="663" cy="166" rx="6.5" ry="8.5" fill="#e6d2c8"/>
<path d="M649 185 Q644 205 646 226" stroke="#c8c8cc" stroke-width="1.6" fill="none"/>
<path d="M652 185 Q648 205 650 224" stroke="#b8b8bc" stroke-width="1" fill="none"/>
<circle cx="684" cy="203" r="3" fill="#c8d8c0"/>
<rect x="822" y="182" width="90" height="56" fill="url(#g2bg)"/>
<path d="M856 199 Q857 186 867 185 Q878 186 879 199 Q879 206 875 208 L860 208 Q856 205 856 199Z" fill="#6a6a72"/>
<ellipse cx="867" cy="204" rx="7.5" ry="9.5" fill="#ecdcd4"/>
<path d="M846 238 Q852 222 866 219 Q882 220 890 232 L892 238Z" fill="#a8d4e0"/>
</svg>
<div id="sb"><div class="th"></div><svg style="position:absolute;left:0;top:0" width="15" height="916"><path d="M3.5 12 L7.5 7 L11.5 12Z" fill="#777"/><path d="M3.5 905 L7.5 910 L11.5 905Z" fill="#777"/></svg></div>
</body></html>
